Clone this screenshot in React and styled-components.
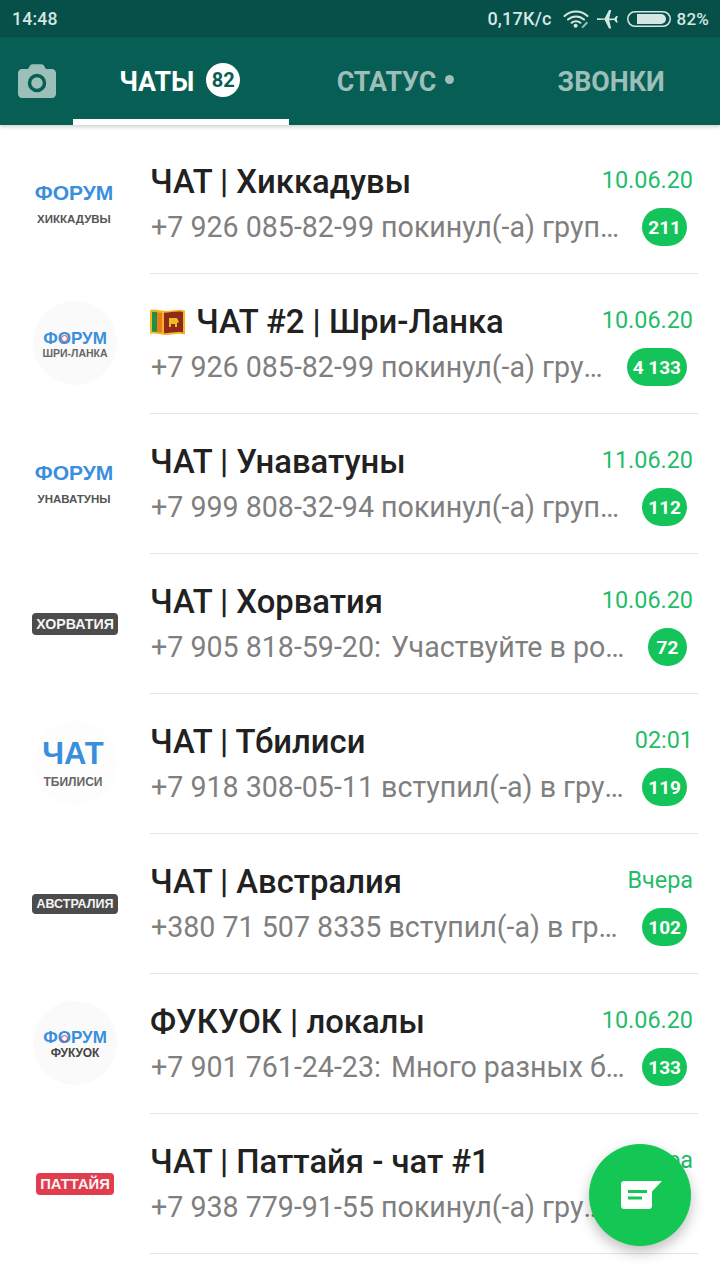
import React from "react";
import styled, { createGlobalStyle } from "styled-components";

const chats = [
  { title: "ЧАТ | Хиккадувы", text: "+7 926 085-82-99 покинул(-а) группу", date: "10.06.20", count: "211", logo: { kind: "forum", sub: "ХИККАДУВЫ" } },
  { title: "ЧАТ #2 | Шри-Ланка", flag: true, text: "+7 926 085-82-99 покинул(-а) группу", date: "10.06.20", count: "4 133", logo: { kind: "round", sub: "ШРИ-ЛАНКА" } },
  { title: "ЧАТ | Унаватуны", text: "+7 999 808-32-94 покинул(-а) группу", date: "11.06.20", count: "112", logo: { kind: "forum", sub: "УНАВАТУНЫ" } },
  { title: "ЧАТ | Хорватия", text: "+7 905 818-59-20:\u200A Участвуйте в розыгрыше", date: "10.06.20", count: "72", logo: { kind: "tag", sub: "ХОРВАТИЯ", size: 14.2 } },
  { title: "ЧАТ | Тбилиси", text: "+7 918 308-05-11 вступил(-а) в группу", date: "02:01", count: "119", logo: { kind: "chat", sub: "ТБИЛИСИ" } },
  { title: "ЧАТ | Австралия", text: "+380 71 507 8335 вступил(-а) в группу", date: "Вчера", count: "102", logo: { kind: "tag", sub: "АВСТРАЛИЯ", size: 12.5 } },
  { title: "ФУКУОК | локалы", text: "+7 901 761-24-23:\u200A Много разных билетов", date: "10.06.20", count: "133", logo: { kind: "round", sub: "ФУКУОК", dark: true } },
  { title: "ЧАТ | Паттайя - чат #1", text: "+7 938 779-91-55 покинул(-а) группу", date: "Вчера", count: "1 204", logo: { kind: "tag", sub: "ПАТТАЙЯ", size: 14.8, red: true } },
];

const GlobalStyle = createGlobalStyle`
  html, body {
    margin: 0;
    padding: 0;
    background: #fff;
  }
  body {
    font-family: Roboto, "Liberation Sans", sans-serif;
  }
`;

const Page = styled.div`
  position: relative;
  width: 720px;
  height: 1280px;
  overflow: hidden;
  background: #fff;
`;

const StatusBar = styled.div`
  height: 37px;
  background: #07504a;
  color: #d6e6e3;
  display: flex;
  align-items: center;
  padding: 0 11px 0 12px;
  font-size: 17.6px;
  font-weight: 500;
  letter-spacing: 0.2px;
`;

const StatusRight = styled.div`
  margin-left: auto;
  display: flex;
  align-items: center;
`;

const Speed = styled.span`
  margin-right: 11px;
  font-size: 18px;
`;

const Percent = styled.span`
  margin-left: 6px;
  font-size: 17px;
`;

const AppBar = styled.div`
  height: 88px;
  background: #075e54;
  display: flex;
  box-shadow: 0 2px 4px rgba(0, 0, 0, 0.18);
  position: relative;
`;

const CameraSlot = styled.div`
  width: 73px;
  padding-left: 18px;
  box-sizing: border-box;
  display: flex;
  align-items: center;
`;

const Tab = styled.div`
  width: 216px;
  box-sizing: border-box;
  display: flex;
  align-items: center;
  justify-content: center;
  gap: ${(p) => (p.$active ? "12px" : "9px")};
  font-size: 26.8px;
  font-weight: 700;
  color: ${(p) => (p.$active ? "#fff" : "#9dbfb9")};
  border-bottom: 6px solid ${(p) => (p.$active ? "#fff" : "transparent")};
  padding: 8px 2px 0 0;
`;

const TabBadge = styled.span`
  width: 34px;
  height: 34px;
  margin-bottom: 4px;
  border-radius: 50%;
  background: #fff;
  color: #075e54;
  font-size: 20px;
  font-weight: 700;
  display: flex;
  align-items: center;
  justify-content: center;
`;

const TabDot = styled.span`
  width: 9px;
  height: 9px;
  border-radius: 50%;
  background: #9dbfb9;
  margin-bottom: 6px;
`;

const List = styled.div`
  padding-top: 9px;
`;

const Row = styled.div`
  height: 140px;
  display: flex;
`;

const AvatarSlot = styled.div`
  width: 150px;
  flex-shrink: 0;
  display: flex;
  align-items: center;
  justify-content: center;
  padding-bottom: 3px;
  box-sizing: border-box;
`;

const Round = styled.div`
  width: 84px;
  height: 84px;
  box-sizing: border-box;
  border-radius: 50%;
  background: ${(p) => (p.$faint ? "#fdfdfd" : "#fafafa")};
  display: flex;
  flex-direction: column;
  align-items: center;
  justify-content: center;
  gap: ${(p) => p.$gap}px;
  padding: ${(p) => (p.$faint ? "0 4px 0 0" : "3px 0 0 0")};
`;

const Plain = styled.div`
  display: flex;
  flex-direction: column;
  align-items: center;
  gap: 11px;
  padding: 3px 2px 0 0;
`;

const Brand = styled.div`
  font-family: "Liberation Sans", sans-serif;
  font-weight: 700;
  font-size: ${(p) => p.$size}px;
  line-height: 1;
  color: #3a8fdc;
  white-space: nowrap;
`;

const RingO = styled.span`
  color: #3a8fdc;
  position: relative;
  &::after {
    content: "";
    position: absolute;
    left: 50%;
    top: 50%;
    width: 5px;
    height: 5px;
    margin: -3px 0 0 -3px;
    border-radius: 50%;
    border: 1.5px solid #c9445a;
  }
`;

const Sub = styled.div`
  font-family: "Liberation Sans", sans-serif;
  font-weight: 700;
  font-size: ${(p) => p.$size}px;
  line-height: 1;
  color: ${(p) => p.$color};
  white-space: nowrap;
`;

const Tag = styled.div`
  font-family: "Liberation Sans", sans-serif;
  font-weight: 700;
  font-size: ${(p) => p.$size}px;
  line-height: 1;
  color: #f4f4f4;
  background: ${(p) => (p.$red ? "#e23d4f" : "#4c4c4c")};
  border-radius: 4px;
  padding: 4px;
  margin-top: 3px;
  white-space: nowrap;
`;

const Body = styled.div`
  flex: 1;
  margin-right: 22px;
  padding-right: 5px;
  border-bottom: 1px solid #e4e4e4;
  min-width: 0;
  display: flex;
  flex-direction: column;
`;

const TopLine = styled.div`
  display: flex;
  align-items: center;
  height: 36px;
  margin-top: 30px;
`;

const Title = styled.div`
  font-size: 32.8px;
  font-weight: 500;
  color: #212121;
  white-space: nowrap;
  display: flex;
  align-items: center;
  gap: 11px;
  position: relative;
`;

const DateText = styled.div`
  margin-left: auto;
  margin-bottom: 4px;
  font-size: 23.4px;
  color: #1fbd69;
`;

const BottomLine = styled.div`
  display: flex;
  align-items: center;
  height: 40px;
  margin-top: 7px;
  padding-left: 1px;
`;

const Preview = styled.div`
  flex: 1;
  min-width: 0;
  font-size: 28.6px;
  color: #7f7f7f;
  white-space: nowrap;
  overflow: hidden;
  text-overflow: ellipsis;
`;

const Count = styled.div`
  flex-shrink: 0;
  min-width: 39px;
  height: 38px;
  box-sizing: border-box;
  padding: 0 6px;
  margin: 0 6px 0 17px;
  border-radius: 20px;
  background: #14c45a;
  color: #fff;
  font-size: 19px;
  font-weight: 700;
  display: flex;
  align-items: center;
  justify-content: center;
`;

const Fab = styled.div`
  position: absolute;
  left: 589px;
  top: 1144px;
  width: 102px;
  height: 102px;
  border-radius: 50%;
  background: #14c653;
  box-shadow: 0 6px 14px rgba(0, 0, 0, 0.25);
  display: flex;
  align-items: center;
  justify-content: center;
  padding-left: 3px;
  box-sizing: border-box;
`;

const Wifi = () => (
  <svg width="26" height="18" viewBox="0 0 26 18">
    <g fill="none" stroke="#d6e6e3" strokeWidth="2" strokeLinecap="round">
      <path d="M1.5 6C8 0 18 0 24.5 6" />
      <path d="M5 9.6C9.6 5.4 16.4 5.4 21 9.6" />
      <path d="M8.6 12.8C11 10.8 15 10.8 17.4 12.8" />
    </g>
    <circle cx="12.6" cy="15.8" r="2" fill="#d6e6e3" />
    <path d="M19 16.5l4.5-5 1.5 1.4-4.6 4.8-2 .4z" fill="#9fbdb8" />
  </svg>
);

const Plane = () => (
  <svg width="22" height="20" viewBox="0 0 22 20" style={{ marginLeft: 8 }}>
    <path
      fill="#d6e6e3"
      d="M0 9.200l7.600.2L12 1h2.200l-2 8.400 5 .2 2-2.600h1.600l-1 3v.6l1 3h-1.600l-2-2.600-5 .2 2 8.400H12L7.600 10.800l-7.600.2z"
    />
  </svg>
);

const Battery = () => (
  <svg width="44" height="18" viewBox="0 0 44 18" style={{ marginLeft: 8 }}>
    <rect x="0.75" y="1.75" width="42.5" height="14.5" rx="7.2" fill="none" stroke="#d6e6e3" strokeWidth="1.5" />
    <path d="M10 4h24a5 5 0 0 1 0 10H10z" fill="#d6e6e3" />
  </svg>
);

const Camera = () => (
  <svg width="38" height="34" viewBox="0 0 38 34">
    <path
      fill="#9dbfb9"
      d="M4 5h6l2-3.200C12.600 .8 13.500 .3 14.600 .3h8.800c1.100 0 2 .5 2.600 1.500L28 5h6c2.200 0 4 1.800 4 4v21c0 2.200-1.800 4-4 4H4c-2.200 0-4-1.800-4-4V9c0-2.200 1.800-4 4-4z"
    />
    <circle cx="19" cy="19" r="7.500" fill="none" stroke="#075e54" strokeWidth="3.500" />
  </svg>
);

const Flag = () => (
  <svg width="35" height="27" viewBox="0 0 35 27">
    <path d="M0 1c6-1.500 12 1.500 18 1s11-2 17-.5v24c-6-1.500-11 0-17 .5s-12-2.500-18-1z" fill="#f2b824" />
    <path d="M2 3c2-.3 3-.2 5 .2v19.800c-2-.4-3-.5-5-.2z" fill="#1f8f4a" />
    <path d="M7 3.200c2 .4 3 .6 5 .6v19.700c-2 0-3-.2-5-.6z" fill="#ee7c16" />
    <path d="M14 3.800c7 0 12-2 19-.8v20.500c-7-1.200-12 .6-19 .8z" fill="#8f2a1a" />
    <path d="M19 9h8l2 4-2 1v4h-2v-3h-4v3h-2z" fill="#f2b824" />
  </svg>
);

const ChatIcon = () => (
  <svg width="41" height="28" viewBox="0 0 41 28">
    <path
      fill="#fff"
      d="M3 0h38L31 10.500V25c0 1.700-1.300 3-3 3H3c-1.700 0-3-1.300-3-3V3C0 1.300 1.300 0 3 0z"
    />
    <rect x="7" y="9" width="19" height="3" fill="#14c653" />
    <rect x="7" y="15.500" width="14" height="3" fill="#14c653" />
  </svg>
);

const Logo = ({ kind, sub, dark, red, size }) => {
  if (kind === "tag") {
    return (
      <Tag $red={red} $size={size}>
        {sub}
      </Tag>
    );
  }
  if (kind === "chat") {
    return (
      <Round $faint $gap={7}>
        <Brand $size={31}>ЧАТ</Brand>
        <Sub $size={12} $color="#666">{sub}</Sub>
      </Round>
    );
  }
  if (kind === "round") {
    return (
      <Round $gap={1}>
        <Brand $size={17}>
          Ф<RingO>О</RingO>РУМ
        </Brand>
        <Sub $size={dark ? 12 : 10.5} $color={dark ? "#444" : "#666"}>{sub}</Sub>
      </Round>
    );
  }
  return (
    <Plain>
      <Brand $size={21}>ФОРУМ</Brand>
      <Sub $size={11.5} $color="#555">{sub}</Sub>
    </Plain>
  );
};

export default function App() {
  return (
    <Page>
      <GlobalStyle />
      <StatusBar>
        14:48
        <StatusRight>
          <Speed>0,17К/с</Speed>
          <Wifi />
          <Plane />
          <Battery />
          <Percent>82%</Percent>
        </StatusRight>
      </StatusBar>
      <AppBar>
        <CameraSlot>
          <Camera />
        </CameraSlot>
        <Tab $active>
          ЧАТЫ
          <TabBadge>82</TabBadge>
        </Tab>
        <Tab>
          СТАТУС
          <TabDot />
        </Tab>
        <Tab>ЗВОНКИ</Tab>
      </AppBar>
      <List>
        {chats.map((chat) => (
          <Row key={chat.title}>
            <AvatarSlot>
              <Logo {...chat.logo} />
            </AvatarSlot>
            <Body>
              <TopLine>
                <Title>
                  {chat.flag && <Flag />}
                  {chat.title}
                </Title>
                <DateText>{chat.date}</DateText>
              </TopLine>
              <BottomLine>
                <Preview>{chat.text}</Preview>
                <Count>{chat.count}</Count>
              </BottomLine>
            </Body>
          </Row>
        ))}
      </List>
      <Fab>
        <ChatIcon />
      </Fab>
    </Page>
  );
}
